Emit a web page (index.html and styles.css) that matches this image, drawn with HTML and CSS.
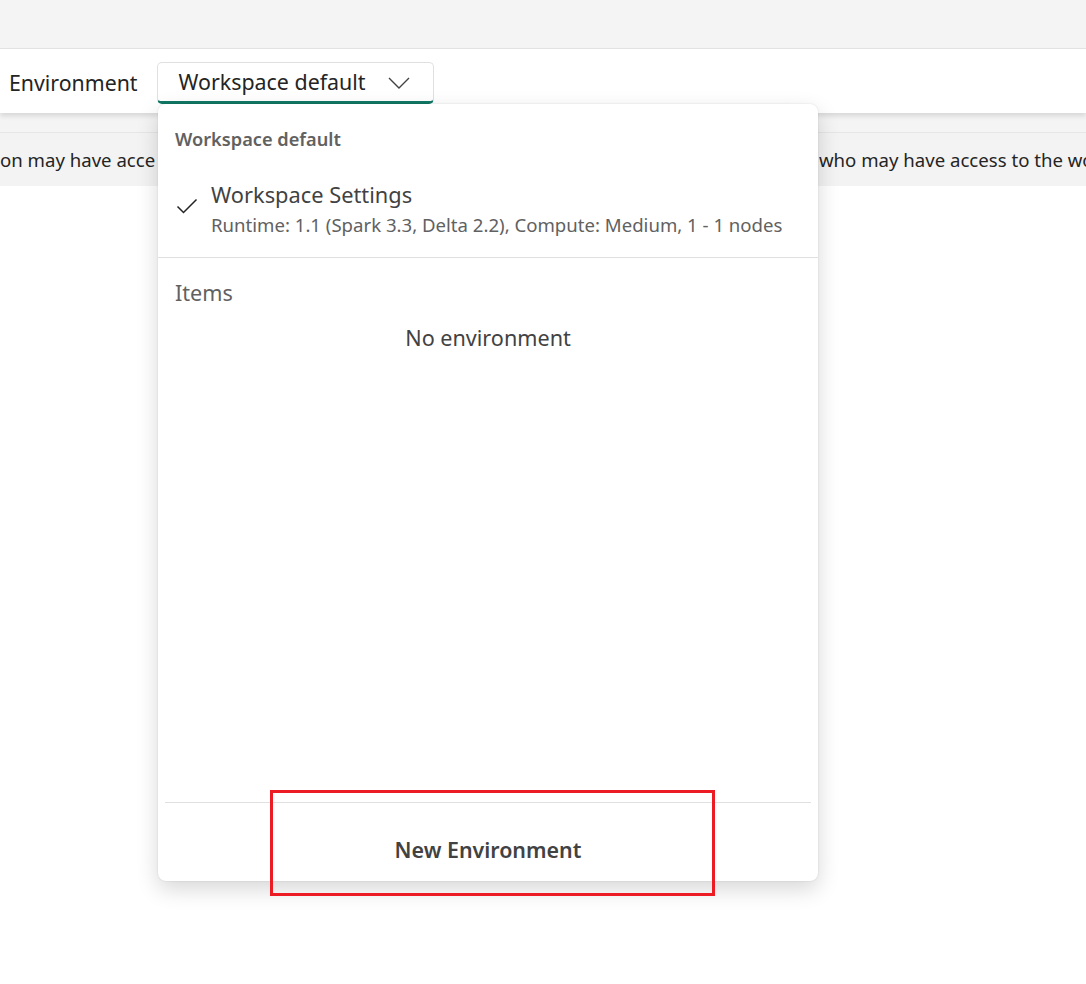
FILE: index.html
```html
<!DOCTYPE html>
<html lang="en">
<head>
<meta charset="utf-8">
<title>Environment</title>
<link rel="stylesheet" href="styles.css">
</head>
<body>
<div class="page">
  <div class="topband"></div>
  <div class="toolbar">
    <span class="label">Environment</span>
    <button class="select">
      <span class="select-text">Workspace default</span>
      <svg class="chev" width="22" height="12" viewBox="0 0 22 12"><path d="M1 1 L11 11 L21 1" fill="none" stroke="#424242" stroke-width="1.4"/></svg>
    </button>
  </div>
  <div class="gap"></div>
  <div class="notice">
    <span class="notice-left">on may have acce</span>
    <span class="notice-hidden"></span>
    <span class="notice-right">who may have access to the wo</span>
  </div>

  <div class="menu">
    <div class="menu-head">Workspace default</div>
    <div class="option">
      <svg class="check" width="22" height="16" viewBox="0 0 22 16"><path d="M1.5 8.5 L7.5 14.5 L20.5 1.5" fill="none" stroke="#242424" stroke-width="1.5"/></svg>
      <div class="option-body">
        <div class="option-title">Workspace Settings</div>
        <div class="option-sub">Runtime: 1.1 (Spark 3.3, Delta 2.2), Compute: Medium, 1 - 1 nodes</div>
      </div>
    </div>
    <div class="divider"></div>
    <div class="items-head">Items</div>
    <div class="empty">No environment</div>
    <div class="spacer"></div>
    <div class="footer-divider"></div>
    <div class="new-env">New Environment</div>
  </div>
  <div class="highlight"></div>
</div>
</body>
</html>
```

FILE: styles.css
```css
* { box-sizing: border-box; }
html, body { margin: 0; padding: 0; }
body {
  width: 1086px;
  height: 984px;
  overflow: hidden;
  background: #ffffff;
  font-family: "Noto Sans", "Open Sans", sans-serif;
  color: #242424;
}
.page { position: relative; width: 1086px; height: 984px; }
.topband {
  height: 49px;
  background: #f4f4f4;
  border-bottom: 1px solid #e4e4e4;
}
.toolbar {
  height: 64px;
  background: #ffffff;
  display: flex;
  align-items: center;
  padding-left: 9px;
  box-shadow: 0 3px 5px rgba(0,0,0,0.12);
  position: relative;
  z-index: 1;
}
.label {
  font-size: 21.3px;
  color: #242424;
  margin-right: 19px;
  margin-top: 3px;
}
.select {
  width: 277px;
  height: 42px;
  margin-top: 3px;
  background: #fff;
  border: 1px solid #e0e0e0;
  border-bottom: 3px solid #117865;
  border-radius: 5px;
  display: flex;
  align-items: center;
  padding: 0 23px 0 21px;
  font-family: inherit;
  cursor: pointer;
}
.select-text {
  flex: 1;
  text-align: left;
  font-size: 21.4px;
  color: #242424;
  white-space: nowrap;
}
.chev { display: block; margin-top: 2px; }
.gap { height: 20px; background: #f4f4f4; border-bottom: 1px solid #e6e6e6; }
.notice {
  height: 53px;
  background: #f3f3f3;
  display: grid;
  grid-template-columns: 158px 661px 1fr;
  align-items: center;
  font-size: 18.6px;
  color: #242424;
  white-space: nowrap;
}
.notice-left, .notice-right { overflow: hidden; }

.menu {
  position: absolute;
  left: 158px;
  top: 104px;
  width: 660px;
  height: 777px;
  background: #ffffff;
  border-radius: 8px;
  box-shadow: 0 0 2px rgba(0,0,0,0.12), 0 8px 22px rgba(0,0,0,0.16);
  z-index: 2;
  display: flex;
  flex-direction: column;
}
.menu-head {
  padding: 23px 17px 0;
  font-size: 18.2px;
  font-weight: 600;
  color: #616161;
  line-height: 24px;
}
.option {
  display: flex;
  align-items: flex-start;
  padding: 29px 17px 19px 18px;
}
.check { margin-right: 13px; margin-top: 18px; flex: none; }
.option-title {
  font-size: 21.8px;
  color: #424242;
  line-height: 30px;
}
.option-sub {
  font-size: 18.6px;
  color: #616161;
  line-height: 26px;
  margin-top: 2px;
  white-space: nowrap;
}
.divider { height: 1px; background: #e0e0e0; }
.items-head {
  padding: 21px 17px 0;
  font-size: 21.6px;
  color: #616161;
  line-height: 28px;
}
.empty {
  text-align: center;
  font-size: 21.6px;
  color: #424242;
  line-height: 28px;
  margin-top: 17px;
}
.spacer { flex: 1; }
.footer-divider { height: 1px; background: #e0e0e0; margin: 0 7px; }
.new-env {
  height: 78px;
  display: flex;
  align-items: center;
  justify-content: center;
  padding-top: 15px;
  font-size: 21.4px;
  font-weight: 600;
  color: #424242;
}
.highlight {
  position: absolute;
  left: 270px;
  top: 790px;
  width: 445px;
  height: 106px;
  border: 3px solid #ed1c24;
  z-index: 3;
}
```
